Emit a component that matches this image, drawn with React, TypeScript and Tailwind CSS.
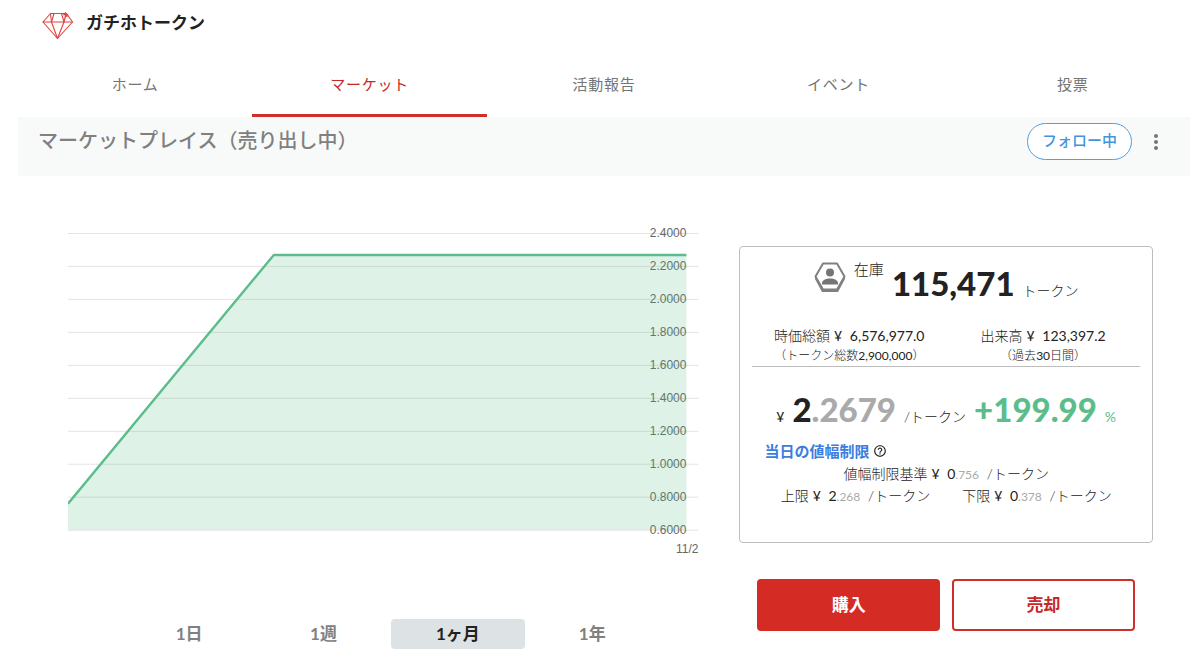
import type { ReactNode } from "react";
import { MdHelpOutline, MdMoreVert } from "react-icons/md";

const tabs = ["ホーム", "マーケット", "活動報告", "イベント", "投票"];
const ranges = ["1日", "1週", "1ヶ月", "1年"];
const ticks = [2.4, 2.2, 2.0, 1.8, 1.6, 1.4, 1.2, 1.0, 0.8, 0.6];

const GemLogo = () => (
  <svg
    viewBox="0 0 32 30"
    className="w-8 h-[30px]"
    fill="none"
    stroke="#e2423b"
    strokeWidth="1.1"
    strokeLinejoin="round"
    strokeLinecap="round"
  >
    <path d="M8.5 3.5H24.5L30.5 12L15.5 28.5L1 12Z" />
    <path d="M1 12H30.5M8.5 3.5L9.5 12L15.5 28.5L22 12L24 3.5" />
    <path d="M9.5 12L12 3.5M22 12L19.5 3.5" />
    <path d="M23.5 2.5V7M21.5 4.8H26M22 3.5L25 6.5" />
  </svg>
);

const MemberBadge = () => (
  <svg viewBox="0 0 32 31" className="w-8 h-[31px] mt-[3px]">
    <path
      d="M9 1.5H23L30.5 14.5L23 27.5H9L1.5 14.5Z"
      fill="none"
      stroke="#808080"
      strokeWidth="2"
      strokeLinejoin="round"
    />
    <path
      d="M1 15L8.5 27H23.5L31 15V17L24 30H8L1 17Z"
      fill="#808080"
    />
    <circle cx="16" cy="10.5" r="4" fill="#757575" />
    <path d="M8 22.5V21C8 18.5 11.5 16.5 16 16.5S24 18.5 24 21V22.5Z" fill="#757575" />
  </svg>
);

const PriceChart = () => (
  <svg
    viewBox="0 0 632 336"
    className="block w-full h-auto"
    role="img"
    aria-label="価格チャート"
  >
    {ticks.map((tick, i) => (
      <line
        key={tick}
        x1="0"
        x2="631"
        y1={9.5 + i * 33}
        y2={9.5 + i * 33}
        stroke="#e4e4e4"
      />
    ))}
    {ticks.map((tick, i) => (
      <text
        key={tick}
        x="619"
        y={13 + i * 33}
        textAnchor="end"
        fontSize="12"
        fill="#666"
      >
        {tick.toFixed(4)}
      </text>
    ))}
    <path
      d="M0 280L206 31H619V306H0Z"
      fill="#59be86"
      fillOpacity="0.2"
    />
    <path
      d="M0 280L206 31H619"
      fill="none"
      stroke="#5bbd8a"
      strokeWidth="2.4"
      strokeLinejoin="round"
    />
    <text x="631" y="329" textAnchor="end" fontSize="12" fill="#666">
      11/2
    </text>
  </svg>
);

interface StatProps {
  label: string;
  value: string;
  note: ReactNode;
}

const Stat = ({ label, value, note }: StatProps) => (
  <div className="text-center leading-5">
    <p>
      {label}
      <span className="font-normal">
        <span className="mx-1">¥</span> {value}
      </span>
    </p>
    <p className="text-xs leading-5">{note}</p>
  </div>
);

interface LimitProps {
  label: string;
  whole: string;
  fraction: string;
}

const Limit = ({ label, whole, fraction }: LimitProps) => (
  <span>
    {label}
    <span className="font-normal">
      <span className="mx-1">¥</span> {whole}
      <span className="text-xs text-[#aaa]">.{fraction}</span>
    </span>
    <span className="ml-1"> /トークン</span>
  </span>
);

const TradeButton = ({
  filled,
  children,
}: {
  filled?: boolean;
  children: ReactNode;
}) => (
  <button
    className={
      filled
        ? "h-13 rounded border-2 border-[#d42c25] bg-[#d42c25] text-[17px] text-white font-bold cursor-pointer"
        : "h-13 rounded border-2 border-[#cf2f2b] bg-white text-[17px] text-[#c62828] font-bold cursor-pointer"
    }
  >
    {children}
  </button>
);

export default function App() {
  return (
    <div className="min-h-screen bg-white text-[#222] font-['Lato','Noto_Sans_CJK_JP',sans-serif]">
      <div className="pl-[18px] pr-[10px]">
        <header className="flex items-center gap-3 h-[50px] pl-6">
          <GemLogo />
          <h1 className="text-[17px] leading-6 font-bold text-[#222] pb-1">
            ガチホトークン
          </h1>
        </header>

        <nav className="grid grid-cols-5 h-[67px]">
          {tabs.map((tab) => (
            <a
              key={tab}
              href="#"
              className={
                tab === "マーケット"
                  ? "flex items-center justify-center pt-1 text-[15px] tracking-wider border-b-3 border-[#cf2f2b] text-[#c62828]"
                  : "flex items-center justify-center pt-1 pb-[3px] text-[15px] tracking-wider text-[#757575]"
              }
            >
              {tab}
            </a>
          ))}
        </nav>

        <div className="flex items-start justify-between h-[59px] pl-5 pr-[22px] pt-1.5 bg-[#f8faf9]">
          <h2 className="pt-[3px] text-xl leading-7 font-medium text-[#808080]">
            マーケットプレイス（売り出し中）
          </h2>
          <div className="flex items-center gap-3">
            <button className="h-[37px] w-[105px] pb-0.5 rounded-full border border-[#4d9fe6] bg-white text-[15px] font-medium text-[#4394e0] cursor-pointer">
              フォロー中
            </button>
            <button
              aria-label="メニュー"
              className="text-[#757575] cursor-pointer"
            >
              <MdMoreVert className="w-6 h-6" />
            </button>
          </div>
        </div>
      </div>

      <main className="grid grid-cols-[632fr_414fr] gap-10 pl-[68px] pr-[47px]">
        <section className="pt-12 font-['Liberation_Sans','Noto_Sans_CJK_JP',sans-serif]">
          <PriceChart />
          <div className="grid grid-cols-4 mt-[59px] pl-[54px] pr-10 font-['Lato','Noto_Sans_CJK_JP',sans-serif]">
            {ranges.map((range) => (
              <button
                key={range}
                className={
                  range === "1ヶ月"
                    ? "h-[30px] rounded text-[17px] font-bold bg-[#dde2e4] text-[#222] cursor-pointer"
                    : "h-[30px] rounded text-[17px] font-bold text-[#808080] cursor-pointer"
                }
              >
                {range}
              </button>
            ))}
          </div>
        </section>

        <section className="pt-[70px]">
          <div className="rounded border border-[#bdbdbd] px-3 pt-3 pb-[35px] text-sm font-light">
            <div className="flex items-start justify-center gap-2">
              <MemberBadge />
              <span className="text-[15px] leading-5">在庫</span>
              <p className="flex items-baseline gap-2 h-10 mt-1">
                <span className="text-[33px] leading-10 font-black">
                  115,471
                </span>
                <span className="leading-5">トークン</span>
              </p>
            </div>

            <div className="grid grid-cols-2 mt-[23px] border-b border-[#bdbdbd]">
              <Stat
                label="時価総額"
                value="6,576,977.0"
                note={
                  <>
                    （トークン総数<span className="font-normal">2,900,000</span>）
                  </>
                }
              />
              <Stat
                label="出来高"
                value="123,397.2"
                note={
                  <>
                    （過去<span className="font-normal">30</span>日間）
                  </>
                }
              />
            </div>

            <p className="flex items-baseline justify-center gap-2 h-10 mt-[22px] whitespace-nowrap">
              <span className="leading-5 font-normal">¥</span>
              <span className="text-[33px] leading-10 font-black">
                2<span className="text-[#aaa]">.2679</span>
              </span>
              <span className="leading-5">/トークン</span>
              <span className="text-[33px] leading-10 font-black text-[#5bbd8a]">
                +199.99
              </span>
              <span className="leading-5 font-normal text-[#5bbd8a]">%</span>
            </p>

            <div className="flex items-center gap-1 mt-[11px] pl-3 leading-[22px]">
              <a href="#" className="text-[15px] font-bold text-[#3b7de0]">
                当日の値幅制限
              </a>
              <MdHelpOutline className="w-[14px] h-[14px]" />
            </div>
            <p className="pt-px text-center leading-[22px]">
              <Limit label="値幅制限基準" whole="0" fraction="756" />
            </p>
            <p className="flex justify-center gap-8 leading-[22px] whitespace-nowrap">
              <Limit label="上限" whole="2" fraction="268" />
              <Limit label="下限" whole="0" fraction="378" />
            </p>
          </div>

          <div className="grid grid-cols-2 gap-3 mt-9 px-[18px]">
            <TradeButton filled>購入</TradeButton>
            <TradeButton>売却</TradeButton>
          </div>
        </section>
      </main>
    </div>
  );
}
